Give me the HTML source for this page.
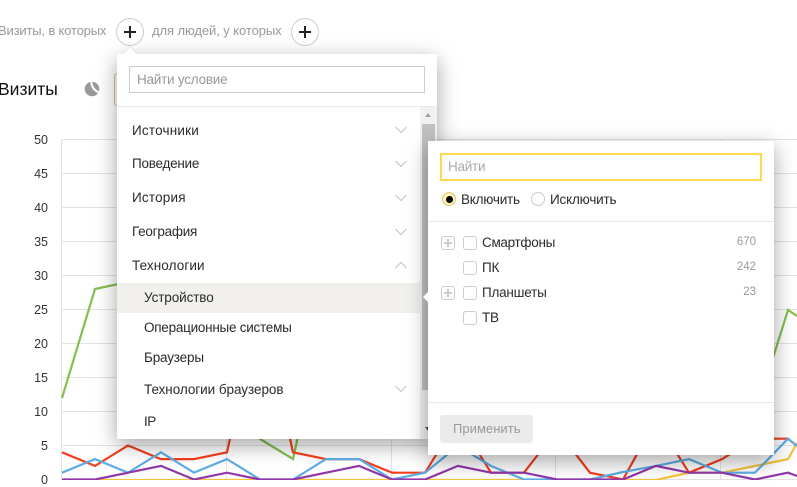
<!DOCTYPE html>
<html><head><meta charset="utf-8"><style>
html,body{margin:0;padding:0;background:#fff}
body{width:797px;height:484px;overflow:hidden;position:relative;font-family:"Liberation Sans",sans-serif;color:#2b2b2b}
.a{position:absolute;white-space:nowrap}
.t{font-size:13.5px;line-height:16px}
.yl{position:absolute;left:20px;width:28px;text-align:right;font-size:12.5px;line-height:14px;color:#333}
.p{position:absolute;background:#fff;box-shadow:0 6px 20px rgba(0,0,0,.36)}
.cb{position:absolute;left:463px;width:12px;height:12px;border:1px solid #ccc;border-radius:3px;background:#fff;z-index:5}
.pl{position:absolute;left:441px;width:12px;height:12px;border:1px solid #ccc;border-radius:3px;z-index:5}
.pl:before{content:"";position:absolute;left:2px;top:5px;width:8px;height:2px;background:#ccc}
.pl:after{content:"";position:absolute;left:5px;top:2px;width:2px;height:8px;background:#ccc}
.n{position:absolute;right:41px;font-size:11.5px;line-height:14px;color:#999;z-index:5}
.round{position:absolute;width:26px;height:26px;border:1px solid #ccc;border-radius:50%;background:#fff}
.round:before{content:"";position:absolute;left:7px;top:12px;width:12px;height:2px;background:#222}
.round:after{content:"";position:absolute;left:12px;top:7px;width:2px;height:12px;background:#222}
</style></head><body>
<div class="a" style="left:-2px;top:23px;font-size:13px;line-height:16px;color:#999;letter-spacing:-.17px">Визиты, в которых</div>
<div class="round" style="left:116px;top:18px"></div>
<div class="a" style="left:152px;top:23px;font-size:13px;line-height:16px;color:#999;letter-spacing:-.08px">для людей, у которых</div>
<div class="round" style="left:291px;top:18px"></div>
<div class="a" style="left:-2px;top:79px;font-size:17.5px;line-height:20px;color:#111">Визиты</div>
<svg class="a" style="left:84px;top:81px" width="16" height="16" viewBox="0 0 16 16"><circle cx="8" cy="8" r="7.3" fill="#999"/><path d="M7.3 0Q7.3 8.500 16 12" fill="none" stroke="#fff" stroke-width="2.200"/></svg>
<div class="a" style="left:114px;top:73px;width:20px;height:31px;border:1px solid #dcc77a;border-radius:3px;background:#fff"></div>

<svg class="a" style="left:0;top:0" width="797" height="480" fill="none">
<g stroke="#e3e3e3" stroke-width="1">
<path d="M62 139.500H797M62 207.500H797M62 173.500H797M62 241.500H797M62 275.500H797M62 309.500H797M62 343.500H797M62 377.500H797M62 411.500H797M62 445.500H797M62 479.500H797"/>
<path d="M61.500 139V480M226.500 139V480M391.500 139V480M555.500 139V480M720.500 139V480"/>
</g>
<g stroke-width="2.200" stroke-linejoin="miter" fill="none">
<polyline stroke="#84bf50" points="62,398 95,289 128,282 161,282 194,300 227,400 260,439 293,459 326,310 359,300 392,320 755,415 788,310 797,316"/>
<polyline stroke="#f6c33a" points="62,480 656,480 689,472.7 722,472.7 755,465.9 788,459.1 797,443"/>
<polyline stroke="#f43f1f" points="62,452.3 95,465.9 128,445.5 161,459.1 194,459.1 227,452.3 260,300 293,452.3 326,459.1 359,459.1 392,472.7 425,472.7 458,420 491,472.7 524,472.7 557,430 590,472.7 623,479.5 656,420 689,472.7 722,459.1 755,438.7 788,438.7 797,446"/>
<polyline stroke="#5cade6" points="62,472.7 95,459.1 128,472.7 161,452.3 194,472.7 227,459.1 260,479.5 293,479.5 326,459.1 359,459.1 392,479.5 425,472.7 458,446 491,465.9 524,479.5 557,479.5 590,479.5 623,472 656,465.9 689,459.1 722,472.7 755,472.7 788,438.7 797,446"/>
<polyline stroke="#9237ab" points="62,479.5 95,479.5 128,472.7 161,465.9 194,479.5 227,472.7 260,479.5 293,479.5 326,472.7 359,465.9 392,479.5 425,479.5 458,465.9 491,472.7 524,472.7 557,479.5 590,479.5 623,479.5 656,465.9 689,472.7 722,472.7 755,479.5 788,472.7 797,476"/>
</g>
</svg>

<div class="yl" style="top:133px">50</div>
<div class="yl" style="top:167px">45</div>
<div class="yl" style="top:201px">40</div>
<div class="yl" style="top:235px">35</div>
<div class="yl" style="top:269px">30</div>
<div class="yl" style="top:303px">25</div>
<div class="yl" style="top:337px">20</div>
<div class="yl" style="top:371px">15</div>
<div class="yl" style="top:405px">10</div>
<div class="yl" style="top:439px">5</div>
<div class="yl" style="top:473px">0</div>

<div class="p" style="left:117px;top:54px;width:320px;height:385px"></div>
<div class="a" style="left:126px;top:49px;width:8px;height:8px;background:#fff;transform:rotate(45deg);box-shadow:-1px -1px 1px rgba(0,0,0,.06)"></div>
<div class="a" style="left:117px;top:54px;width:320px;height:385px;background:#fff"></div>
<div class="a" style="left:129px;top:66px;width:294px;height:25px;border:1px solid #ccc;background:#fff"></div>
<div class="a t" style="left:137px;top:72px;color:#999;letter-spacing:-.23px">Найти условие</div>
<div class="a" style="left:117px;top:106px;width:320px;height:1px;background:#e8e8e8"></div>

<div class="a" style="left:420px;top:107px;width:17px;height:332px;background:#f1f1f1"></div>
<div class="a" style="left:422px;top:124px;width:13px;height:266px;background:#c1c1c1"></div>
<div class="a" style="left:425px;top:113px;width:0;height:0;border-left:3.5px solid transparent;border-right:3.5px solid transparent;border-bottom:4px solid #a3a3a3"></div>
<div class="a" style="left:425px;top:427px;width:0;height:0;border-left:3.5px solid transparent;border-right:3.5px solid transparent;border-top:4px solid #505050"></div>

<div class="a" style="left:117px;top:283px;width:303px;height:30px;background:#f1f0ed"></div>

<div class="a t" style="left:132px;top:123px;letter-spacing:.2px">Источники</div>
<div class="a t" style="left:132px;top:156px;letter-spacing:-.25px">Поведение</div>
<div class="a t" style="left:132px;top:190px;letter-spacing:.2px">История</div>
<div class="a t" style="left:132px;top:224px;letter-spacing:-.25px">География</div>
<div class="a t" style="left:132px;top:258px;letter-spacing:.1px">Технологии</div>
<div class="a t" style="left:144px;top:290px;letter-spacing:-.1px">Устройство</div>
<div class="a t" style="left:144px;top:320px;letter-spacing:-.25px">Операционные системы</div>
<div class="a t" style="left:144px;top:350px;letter-spacing:-.17px">Браузеры</div>
<div class="a t" style="left:144px;top:382px;letter-spacing:-.05px">Технологии браузеров</div>
<div class="a t" style="left:144px;top:414px;letter-spacing:-.5px">IP</div>

<svg class="a" style="left:394px;top:120px" width="16" height="280" fill="none" stroke="#c8c8c8" stroke-width="1.2">
<path d="M1.500 7L7 12.500 12.500 7M1.500 41L7 46.500 12.500 41M1.500 75L7 80.500 12.500 75M1.500 109L7 114.500 12.500 109M1.500 148L7 142.500 12.500 148M1.500 266L7 271.500 12.500 266"/>
</svg>

<div class="p" style="left:428px;top:141px;width:346px;height:314px"></div>
<div class="a" style="left:423px;top:292px;width:0;height:0;border-top:5px solid transparent;border-bottom:5px solid transparent;border-right:5px solid #fff"></div>
<div class="a" style="left:440px;top:153px;width:318px;height:24px;border:2px solid #ffd84d;background:#fff"></div>
<div class="a t" style="left:448px;top:159px;color:#aaa;letter-spacing:-.25px">Найти</div>
<div class="a" style="left:442px;top:192px;width:12px;height:12px;border-radius:50%;background:#fff0b8;border:1px solid #dcc77a"></div>
<div class="a" style="left:445.5px;top:195.5px;width:7px;height:7px;border-radius:50%;background:#000"></div>
<div class="a t" style="left:461px;top:192px;letter-spacing:-.22px">Включить</div>
<div class="a" style="left:531px;top:192px;width:12px;height:12px;border-radius:50%;background:#fff;border:1px solid #ccc"></div>
<div class="a t" style="left:550px;top:192px;letter-spacing:-.18px">Исключить</div>
<div class="a" style="left:428px;top:221px;width:346px;height:1px;background:#e8e8e8"></div>

<div class="pl" style="top:236px"></div><div class="cb" style="top:236px"></div>
<div class="a t" style="left:482px;top:235px;letter-spacing:-.3px">Смартфоны</div><div class="n" style="top:235px">670</div>
<div class="cb" style="top:261px"></div>
<div class="a t" style="left:482px;top:260px;letter-spacing:-.2px">ПК</div><div class="n" style="top:260px">242</div>
<div class="pl" style="top:286px"></div><div class="cb" style="top:286px"></div>
<div class="a t" style="left:482px;top:285px;letter-spacing:-.22px">Планшеты</div><div class="n" style="top:285px">23</div>
<div class="cb" style="top:311px"></div>
<div class="a t" style="left:482px;top:310px;letter-spacing:-.2px">ТВ</div>

<div class="a" style="left:428px;top:402px;width:346px;height:1px;background:#e8e8e8"></div>
<div class="a" style="left:440px;top:415px;width:93px;height:28px;border-radius:3px;background:#ebebeb"></div>
<div class="a t" style="left:453px;top:421px;color:#999;letter-spacing:.04px;font-size:13px">Применить</div>
</body></html>
